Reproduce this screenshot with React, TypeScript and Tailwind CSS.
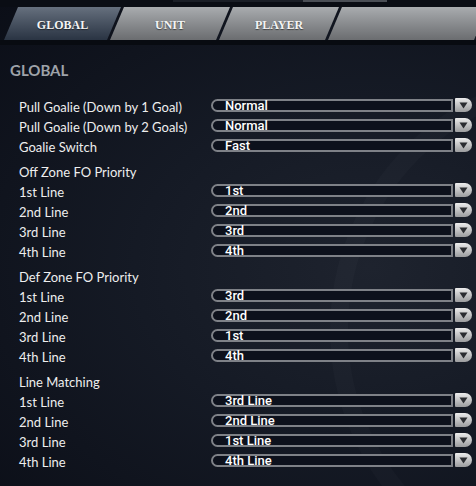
import React from 'react';

type Row = { label: string; value: string };
type Group = { title?: string; rows: Row[] };

const groups: Group[] = [
  {
    rows: [
      { label: 'Pull Goalie (Down by 1 Goal)', value: 'Normal' },
      { label: 'Pull Goalie (Down by 2 Goals)', value: 'Normal' },
      { label: 'Goalie Switch', value: 'Fast' },
    ],
  },
  {
    title: 'Off Zone FO Priority',
    rows: [
      { label: '1st Line', value: '1st' },
      { label: '2nd Line', value: '2nd' },
      { label: '3rd Line', value: '3rd' },
      { label: '4th Line', value: '4th' },
    ],
  },
  {
    title: 'Def Zone FO Priority',
    rows: [
      { label: '1st Line', value: '3rd' },
      { label: '2nd Line', value: '2nd' },
      { label: '3rd Line', value: '1st' },
      { label: '4th Line', value: '4th' },
    ],
  },
  {
    title: 'Line Matching',
    rows: [
      { label: '1st Line', value: '3rd Line' },
      { label: '2nd Line', value: '2nd Line' },
      { label: '3rd Line', value: '1st Line' },
      { label: '4th Line', value: '4th Line' },
    ],
  },
];

const tabs = [
  { name: 'GLOBAL', width: 'w-[117px]', active: true },
  { name: 'UNIT', width: 'w-[120px]', active: false },
  { name: 'PLAYER', width: 'w-[120px]', active: false },
  { name: '', width: 'w-[160px]', active: false },
];

function Select({ value }: { value: string }) {
  return (
    <div className="flex items-center mt-[1px] h-[14px]">
      <div className="w-[242px] h-[13px] flex items-center rounded-l-full border-2 border-[#7e8187] bg-[#0d111c] pl-[12px] text-[13px] font-medium text-white leading-none [font-family:Roboto,'Liberation_Sans',sans-serif]">
        {value}
      </div>
      <div className="ml-[2px] w-[17px] h-[14px] rounded-r-[7px] rounded-l-[1px] bg-gradient-to-b from-[#ececec] to-[#9c9d9f] flex items-center justify-center">
        <svg width="9" height="7" viewBox="0 0 9 7">
          <path d="M0.5 0.5 H8.5 L4.5 6.5 Z" fill="#2b2d31" />
        </svg>
      </div>
    </div>
  );
}

export default function App() {
  return (
    <div className="relative w-[476px] h-[486px] overflow-hidden bg-[radial-gradient(ellipse_at_78%_55%,#1e232e_0%,#151a25_45%,#0b0e17_100%)] [font-family:Lato,'Noto_Sans',sans-serif]">
      {/* faint swoosh */}
      <div className="absolute left-[330px] top-[70px] w-[520px] h-[520px] rounded-full border-[18px] border-[#ffffff05]" />

      <div className="relative h-[7px] bg-[#0a0d14] flex">
        <div className="ml-[173px] w-[130px] h-[2px] bg-[#1a1e26]" />
        <div className="w-[84px] h-[2px] bg-[#4a4e55]" />
      </div>

      <div className="relative flex h-[33px] pl-[4px]">
        {tabs.map((t, i) => (
          <div
            key={i}
            className={`${t.width} shrink-0 h-full flex items-center justify-center pt-[3px] [clip-path:polygon(14px_0,100%_0,calc(100%-14px)_100%,0_100%)] ${i > 0 ? '-ml-[11px]' : ''} ${t.active ? 'bg-gradient-to-b from-[#66707e] to-[#2a3443]' : 'bg-gradient-to-b from-[#a9acaf] to-[#6b6d70]'}`}
          >
            <span className="text-[12px] font-bold text-[#f4f4f4] [font-family:'Liberation_Serif','Times_New_Roman',serif] [text-shadow:0_1px_1px_rgba(0,0,0,0.5)]">
              {t.name}
            </span>
          </div>
        ))}
      </div>
      <div className="relative h-[5px] bg-[#080b11]" />

      <div className="relative mt-[15px] pl-[10px] text-[15px] leading-[20px] font-bold text-[#9ea2a9]">GLOBAL</div>

      <div className="relative mt-[17px] pl-[19px]">
        {groups.map((g, gi) => (
          <div key={gi} className={gi > 0 ? 'mt-[5px]' : ''}>
            {g.title && (
              <div className="h-[20px] leading-[20px] text-[13px] text-[#eeeeee]">{g.title}</div>
            )}
            {g.rows.map((r, ri) => (
              <div key={ri} className="flex items-start h-[20px]">
                <div className="w-[192px] leading-[20px] text-[13px] text-[#eeeeee] whitespace-nowrap">{r.label}</div>
                <Select value={r.value} />
              </div>
            ))}
          </div>
        ))}
      </div>
    </div>
  );
}
